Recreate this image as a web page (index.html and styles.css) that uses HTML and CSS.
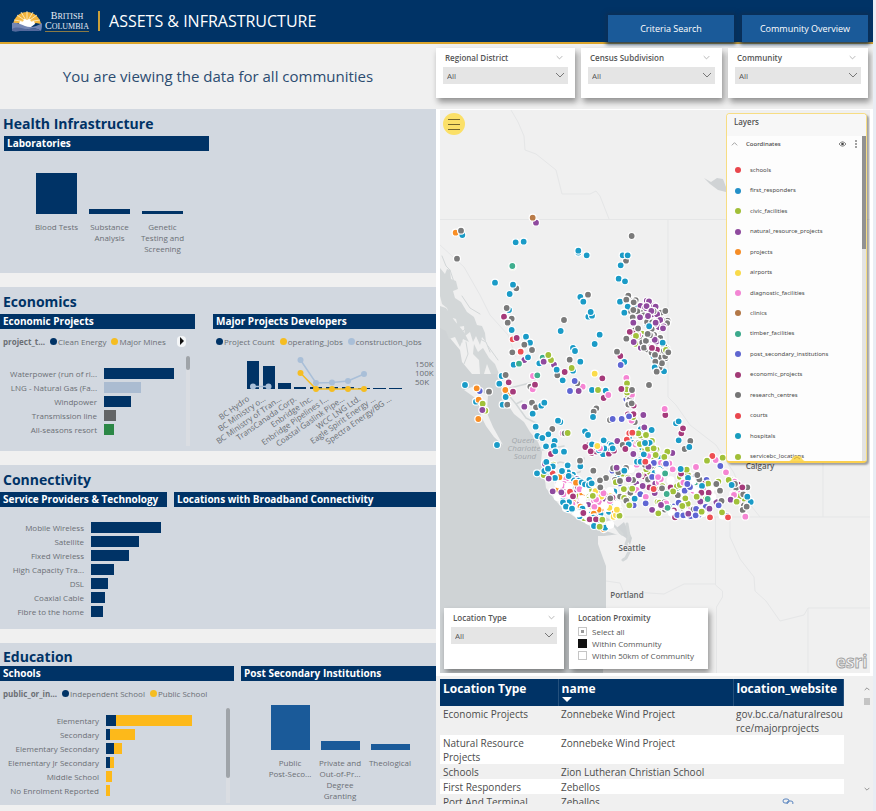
FILE: index.html
```html
<!DOCTYPE html>
<html lang="en">
<head>
<meta charset="utf-8">
<title>Assets &amp; Infrastructure</title>
<link rel="stylesheet" href="styles.css">
</head>
<body>
<svg width="0" height="0" class="defs" aria-hidden="true">
  <symbol id="chev" viewBox="0 0 10 6"><path d="M1 1l4 4 4-4" fill="none" stroke="currentColor"/></symbol>
</svg>
<div class="page">
  <header class="top">
    <svg class="sun" viewBox="0 0 30 21" aria-hidden="true">
      <path d="M1 13C3 5 8 1 15 1s13 5 14 12l-5-1-9 4-9-4z" fill="#f3b53c"/>
      <path d="M15 11L5 4M15 11L9 1M15 11V0M15 11l6-10M15 11l10-7M15 11L2 9M15 11l13-2" stroke="#fdf3d2" stroke-width=".8"/>
      <path d="M7 13l1-3 3 1 1-3 3 1 3-1 1 3 3-1 1 3-4 3H10z" fill="#fff"/>
      <path d="M0 12c4-1 8 1 13 3s11 1 17-3c0 2 0 5-1 8-6-4-11-2-16-1-5 1-9 2-13 1z" fill="#7386b4"/>
      <path d="M0 18c6-4 12 1 17 0s8-1 12 2H0z" fill="#54699d"/>
    </svg>
    <div class="brand"><span>B<small>RITISH</small></span><span>C<small>OLUMBIA</small></span></div>
    <h1>ASSETS &amp; INFRASTRUCTURE</h1>
    <nav>
      <button type="button">Criteria Search</button>
      <button type="button">Community Overview</button>
    </nav>
  </header>
  <main>
    <div class="left">
      <p class="message">You are viewing the data for all communities</p>

      <section>
        <h2>Health Infrastructure</h2>
        <div class="panels health">
          <div>
            <h3>Laboratories</h3>
            <ul class="columns labs">
              <li><i style="height:41px"></i><span>Blood Tests</span></li>
              <li><i style="height:5px"></i><span>Substance Analysis</span></li>
              <li><i style="height:3px"></i><span>Genetic Testing and Screening</span></li>
            </ul>
          </div>
        </div>
      </section>

      <section>
        <h2>Economics</h2>
        <div class="panels economics">
          <div>
            <h3>Economic Projects</h3>
            <p class="legend"><b>project_t...</b><span class="navy">Clean Energy</span><span class="gold">Major Mines</span><button type="button" class="next" aria-label="More"></button></p>
            <div class="scroller">
              <ul class="bars projects">
                <li><span>Waterpower (run of ri...</span><i style="width:70px"></i></li>
                <li><span>LNG - Natural Gas (Fa...</span><i class="pale" style="width:37px"></i></li>
                <li><span>Windpower</span><i style="width:27px"></i></li>
                <li><span>Transmission line</span><i class="grey" style="width:12px"></i></li>
                <li><span>All-seasons resort</span><i class="green" style="width:10px"></i></li>
              </ul>
              <div class="track"><i class="thumb short"></i></div>
            </div>
          </div>
          <div>
            <h3>Major Projects Developers</h3>
            <p class="legend indent"><span class="navy">Project Count</span><span class="gold">operating_jobs</span><span class="pale">construction_jobs</span></p>
            <svg class="combo" viewBox="213 351 223 97" role="img" aria-label="Major project developers">
              <g fill="#036">
                <rect x="247" y="360" width="12" height="28"/><rect x="263" y="365" width="12" height="23"/><rect x="278" y="382" width="13" height="6"/>
                <rect x="294" y="386" width="12" height="2"/><rect x="310" y="386" width="12" height="2"/><rect x="326" y="386" width="12" height="2"/><rect x="342" y="386" width="12" height="2"/><rect x="358" y="387" width="12" height="1"/><rect x="373" y="387" width="13" height="1"/><rect x="389" y="387" width="13" height="1"/>
              </g>
              <g fill="none" stroke-width="1.5"><path stroke="#a9bfd8" d="M253 385.500H268.500M300.500 359L316 382L332 381.500L348 380L364 373"/><path stroke="#f5bd22" d="M300.500 372L316 388H364"/></g>
              <g fill="#a9bfd8"><circle cx="253" cy="385.500" r="3"/><circle cx="268.500" cy="385.500" r="3"/><circle cx="300.500" cy="359" r="3"/><circle cx="316" cy="382" r="3"/><circle cx="332" cy="381.500" r="3"/><circle cx="348" cy="380" r="3"/><circle cx="364" cy="373" r="3"/></g>
              <g fill="#f5bd22"><circle cx="300.500" cy="372" r="3"/><circle cx="316" cy="388" r="3"/><circle cx="332" cy="388" r="3"/><circle cx="348" cy="388" r="3"/><circle cx="364" cy="388" r="3"/></g>
              <g class="tick"><text x="415" y="366">150K</text><text x="415" y="375">100K</text><text x="415" y="384">50K</text></g>
              <g class="slant">
                <text transform="translate(250 399) rotate(-35)">BC Hydro</text>
                <text transform="translate(266 399) rotate(-35)">BC Ministry o...</text>
                <text transform="translate(282 399) rotate(-35)">BC Ministry of Tran...</text>
                <text transform="translate(297 399) rotate(-35)">TransCanada Corp.</text>
                <text transform="translate(313 399) rotate(-35)">Enbridge Inc.</text>
                <text transform="translate(329 399) rotate(-35)">Enbridge Pipelines I...</text>
                <text transform="translate(345 399) rotate(-35)">Coastal Gaslink Pipe...</text>
                <text transform="translate(361 399) rotate(-35)">WCC LNG Ltd.</text>
                <text transform="translate(376 399) rotate(-35)">Eagle Spirit Energy ...</text>
                <text transform="translate(392 399) rotate(-35)">Spectra Energy/BG ...</text>
              </g>
            </svg>
          </div>
        </div>
      </section>

      <section>
        <h2>Connectivity</h2>
        <div class="panels connectivity">
          <div>
            <h3>Service Providers &amp; Technology</h3>
            <ul class="bars providers">
              <li><span>Mobile Wireless</span><i style="width:70px"></i></li>
              <li><span>Satellite</span><i style="width:48px"></i></li>
              <li><span>Fixed Wireless</span><i style="width:38px"></i></li>
              <li><span>High Capacity Tra...</span><i style="width:23px"></i></li>
              <li><span>DSL</span><i style="width:17px"></i></li>
              <li><span>Coaxial Cable</span><i style="width:14px"></i></li>
              <li><span>Fibre to the home</span><i style="width:12px"></i></li>
            </ul>
          </div>
          <div><h3>Locations with Broadband Connectivity</h3></div>
        </div>
      </section>

      <section>
        <h2 class="tight">Education</h2>
        <div class="panels education">
          <div>
            <h3>Schools</h3>
            <p class="legend"><b>public_or_in...</b><span class="navy">Independent School</span><span class="gold">Public School</span></p>
            <div class="scroller">
              <ul class="bars schools">
                <li><span>Elementary</span><i style="width:10px"></i><i class="gold" style="width:76px"></i></li>
                <li><span>Secondary</span><i style="width:4px"></i><i class="gold" style="width:25px"></i></li>
                <li><span>Elementary Secondary</span><i style="width:8px"></i><i class="gold" style="width:8px"></i></li>
                <li><span>Elementary Jr Secondary</span><i style="width:4px"></i><i class="gold" style="width:4px"></i></li>
                <li><span>Middle School</span><i class="gold" style="width:6px"></i></li>
                <li><span>No Enrolment Reported</span><i class="gold" style="width:4px"></i></li>
              </ul>
              <div class="track"><i class="thumb tall"></i></div>
            </div>
          </div>
          <div>
            <h3>Post Secondary Institutions</h3>
            <ul class="columns post">
              <li><i style="height:45px"></i><span>Public<br>Post-Seco...</span></li>
              <li><i style="height:9px"></i><span>Private and<br>Out-of-Pr...<br>Degree<br>Granting</span></li>
              <li><i style="height:6px"></i><span>Theological</span></li>
            </ul>
          </div>
        </div>
      </section>
    </div>

    <div class="right">
      <div class="filters">
        <div class="card"><label for="rd">Regional District<svg><use href="#chev"/></svg></label><div class="pick"><select id="rd"><option>All</option></select><svg><use href="#chev"/></svg></div></div>
        <div class="card"><label for="cs">Census Subdivision<svg><use href="#chev"/></svg></label><div class="pick"><select id="cs"><option>All</option></select><svg><use href="#chev"/></svg></div></div>
        <div class="card"><label for="co">Community<svg><use href="#chev"/></svg></label><div class="pick"><select id="co"><option>All</option></select><svg><use href="#chev"/></svg></div></div>
      </div>

      <div class="mapframe">
        <div class="map">
          <svg class="canvas" viewBox="440 110 430 563" role="img" aria-label="Map of British Columbia">
            <rect x="440" y="110" width="430" height="563" fill="#f0f0f0"/>
            <path fill="#cfd3d5" d="M440 318L446 326 450 338 460 350 462 362 472 374 499 374 503 380 502 398 508 405 514 414 524 422 530 432 538 442 542 452 541 462 544 472 546 488 552 496 562 508 576 518 590 526 604 532 614 530 624 522 628 530 632 538 630 545 626 538 620 534 604 536 598 536 598 544 603 558 606 566 606 590 606 608 604 625 603 673 440 673Z"/>
            <path fill="#d3d7d8" d="M440 268l5 6 2-5 3 1 1 9 5 2 2 8-5 2 2 7 6 4 6 10 7 5 3 8 5 1 3 7 1 9-4-5-2 8-4-9-3 6-3-10-5 4-1-10-6 1-2-8-6-2-3-9-5-4-2-8zM440 306l6 2 8 12 10 12 5 10-6-3-3 8-5-10-6 2-3-8-6-3zM474 344l4 8 5-4 6 10 6 6 4 10h-8l-4-10-3 10h-4l-1-14-6-6z"/>
            <g fill="none" stroke="#d3d7d8" stroke-linecap="round" stroke-linejoin="round">
              <path d="M442 256l4 10 4 4M450 270l4 12M458 318l-8-4M468 326l-8 8 2 8M478 338l8 4 4 10M488 346l10 14M462 296l8 12 10 6M466 342l2 12-4 10M440 290l6 4"/>
              <path stroke-width="1.500" d="M506 392l10 12 6-3M516 404l10 14 12 6M538 440l14-6M542 450l22-4M546 468l14-6 10 2M552 478l28-6 4-14M560 482l14 8 12 0M510 388l24-6 4-10"/>
              <path stroke-width="3" d="M544 478l16 8 14 14 18 12 16 8 14 14M627 524l2 12-3 8 4 6-4 8-3 2"/>
            </g>
            <path fill="#f0f0f0" d="M464 390l8-3 8 4 8 4-1 18 6 14 10 18-9-8-8-11-5-10-2-12-5-7zM541 470l16 8 18 14 20 20 20 16 6 8-12-4-24-10-22-20-14-12z"/>
            <path fill="#d0d3d5" d="M704 178l7 4 6-4 6 1 3 8v5l-8-2-8-6z"/>
            <g fill="none" stroke="#e5e6e7">
              <path d="M440 219.500H870M668 220V397l8 8 14 20 26 20 18 28 10 24 16 20M625 517H870M511 110l7 12 6 14 1 14 11 4 20 16 6 24 28 0 6-3 4 5 9 23M440 245l24 22 16 28 10 20 18 20 8 22"/>
              <path d="M715.500 517v68l7 6v6l-6 10v66M730 517v20l10 22 14 18 1 14 11 10 14 20 24-6 4-7h62M808 608v65M823 463v54M606 581l14 2 4 10 10-1 30 2 20-10h31"/>
            </g>
            <g id="dots" stroke="#fff" stroke-width="1.200"></g>
            <g class="water"><text x="523" y="443">Queen</text><text x="524" y="451">Charlotte</text><text x="525" y="459">Sound</text></g>
            <g class="city"><text x="760" y="469">Calgary</text><text x="632" y="551">Seattle</text><text x="627" y="598">Portland</text></g>
            <g class="esri"><text x="836" y="668">esri</text></g>
          </svg>

          <button type="button" class="menu" aria-label="Menu"><i></i><i></i><i></i></button>

          <aside class="layers">
            <h4>Layers</h4>
            <div class="group"><svg class="up"><use href="#chev"/></svg><span>Coordinates</span>
              <svg class="eye" viewBox="0 0 8 6"><path d="M0 3q4-5 8 0q-4 5-8 0" fill="none" stroke="#555" stroke-width=".8"/><circle cx="4" cy="3" r="1.500" fill="#444"/></svg>
              <svg class="more" viewBox="0 0 2 8"><circle cx="1" cy="1" r=".7"/><circle cx="1" cy="4" r=".7"/><circle cx="1" cy="7" r=".7"/></svg>
            </div>
            <ul>
              <li class="c-r">schools</li><li class="c-f">first_responders</li><li class="c-l">civic_facilities</li><li class="c-p">natural_resource_projects</li><li class="c-o">projects</li><li class="c-y">airports</li><li class="c-k">diagnostic_facilities</li><li class="c-n">clinics</li><li class="c-t">timber_facilities</li><li class="c-v">post_secondary_institutions</li><li class="c-m">economic_projects</li><li class="c-g">research_centres</li><li class="c-r">courts</li><li class="c-b">hospitals</li><li class="c-l">servicebc_locations</li>
            </ul>
            <div class="rail"></div>
            <svg class="tab" viewBox="0 0 16 6"><path d="M0 6q2 0 4-4q4-3 8 0q2 4 4 4z" fill="#fbdb5c"/><path d="M5 4l3-2 3 2" fill="none" stroke="#c9a63a" stroke-width=".8"/></svg>
          </aside>

          <div class="lower">
            <div class="card loctype"><label for="lt">Location Type<svg><use href="#chev"/></svg></label><div class="pick"><select id="lt"><option>All</option></select><svg><use href="#chev"/></svg></div></div>
            <fieldset class="card prox">
              <legend>Location Proximity</legend>
              <label><input type="checkbox" class="some">Select all</label>
              <label><input type="checkbox" checked>Within Community</label>
              <label><input type="checkbox">Within 50km of Community</label>
            </fieldset>
          </div>
        </div>
      </div>

      <div class="grid">
        <table>
          <colgroup><col class="w1"><col class="w2"><col class="w3"></colgroup>
          <thead><tr><th>Location Type</th><th>name<i class="sort"></i></th><th>location_website</th></tr></thead>
          <tbody>
            <tr><td>Economic Projects</td><td>Zonnebeke Wind Project</td><td>gov.bc.ca/naturalresou<wbr>rce/majorprojects</td></tr>
            <tr><td>Natural Resource Projects</td><td>Zonnebeke Wind Project</td><td></td></tr>
            <tr><td>Schools</td><td>Zion Lutheran Christian School</td><td></td></tr>
            <tr><td>First Responders</td><td>Zebellos</td><td></td></tr>
            <tr><td>Port And Terminal</td><td>Zeballos</td><td class="link"><svg viewBox="0 0 12 8"><g fill="none" stroke="#5b86c0"><rect x="1" y="1" width="6" height="4" rx="2"/><rect x="5" y="3" width="6" height="4" rx="2"/></g></svg></td></tr>
          </tbody>
        </table>
        <div class="vbar"><svg class="up" viewBox="0 0 10 6"><use href="#chev" width="10" height="6"/></svg><i></i><svg class="down" viewBox="0 0 10 6"><use href="#chev" width="10" height="6"/></svg></div>
      </div>
    </div>
  </main>
</div>
<script src="map.js"></script>
</body>
</html>
```
FILE: styles.css
```css
* { box-sizing: border-box; margin: 0; padding: 0; }
body { background: #e9edf4; font-family: "Open Sans", "Noto Sans", sans-serif; font-size: 8px; line-height: 11px; color: #6b6f75; }
ul { list-style: none; }
i { font-style: normal; display: block; }
button, select, input { font: inherit; color: inherit; border: 0; }
.defs { position: absolute; }
.page { margin-right: 3px; background: #f0f0f0; overflow: hidden; }

.top { display: flex; align-items: center; height: 44px; padding-left: 12px; background: #036; border-bottom: 2px solid #dba52c; color: #fff; }
.sun { width: 30px; height: 21px; }
.brand { display: flex; flex-direction: column; align-items: center; margin-left: 3px; font: 10px/9px "Liberation Serif", serif; color: #e8edf5; }
.brand small { font-size: 8px; }
.brand span:last-child { border-bottom: 1px solid #8a7a45; }
h1 { margin-left: 9px; padding-left: 9px; border-left: 2px solid #c9a03a; font-size: 16px; line-height: 20px; font-weight: 400; white-space: nowrap; }
nav { display: flex; gap: 8px; margin-left: auto; margin-right: 5px; align-self: flex-end; }
nav button { width: 126px; height: 27px; background: #1a5a99; color: #fff; font-size: 9px; font-weight: 500; box-shadow: 0 0 4px 2px #0d2f55; }

main { display: grid; grid-template-columns: 436fr 437fr; align-items: start; }
.message { height: 65px; padding-top: 20px; text-align: center; font-size: 15px; line-height: 24px; color: #2c4c70; }
.left { display: grid; padding-bottom: 6px; }
section { min-height: 164px; margin-bottom: 14px; background: #d2d8e0; }
section:last-child { min-height: 162px; margin-bottom: 0; }
h2 { height: 27px; padding: 3px 3px 0; font-size: 14px; line-height: 23px; color: #036; font-weight: 700; }
h2.tight { height: 23px; padding-top: 2px; }
h3 { height: 15px; padding-left: 3px; background: #036; color: #fff; font-size: 10px; line-height: 15px; font-weight: 700; white-space: nowrap; }
.panels { display: grid; }
.health { grid-template-columns: 205fr 226fr; padding-left: 4px; }
.economics { grid-template-columns: 195fr 223fr; gap: 18px; }
.connectivity { grid-template-columns: 167fr 262fr; gap: 7px; }
.education { grid-template-columns: 234fr 195fr; gap: 7px; }

.columns { display: flex; }
.columns li { display: flex; flex-direction: column; justify-content: flex-end; align-items: center; text-align: center; }
.columns i { background: #036; width: 41px; }
.columns span { margin-top: 7px; width: 51px; height: 44px; }
.labs { padding: 22px 0 0 27px; gap: 2px; }
.post { padding: 24px 0 0 24px; }
.post li { width: 50px; }
.post i { width: 39px; background: #1a5a99; }

.legend { display: flex; align-items: center; height: 14px; margin-top: 5px; padding-left: 3px; gap: 5px; white-space: nowrap; }
.legend span { display: flex; align-items: center; gap: 1px; }
.legend span::before { content: ""; width: 7px; height: 7px; border-radius: 50%; background: #036; }
.legend .gold::before { background: #f5bd22; }
.legend .pale::before { background: #a9bfd8; }
.next { width: 9px; height: 11px; margin: 0 9px 0 auto; border-radius: 4px; background: #f4f6f8; }
.next::before { content: ""; display: block; margin-left: 3px; border: solid transparent; border-width: 4px 0 4px 4px; border-left-color: #111; }
.scroller { display: flex; justify-content: space-between; }
.track { width: 4px; background: #dadde2; }
.thumb { background: #9fa4a9; border-radius: 2px; }
.short { height: 14px; }
.tall { height: 70px; }
.bars li { display: flex; align-items: center; height: 14px; }
.bars span { text-align: right; white-space: nowrap; margin-right: 7px; }
.bars i { height: 11px; background: #036; }
.bars .pale { background: #abbcd1; }
.bars .grey { background: #636567; }
.bars .green { background: #2b8746; }
.bars .gold { background: #fdb91a; }
.projects { padding: 18px 0 13px; }
.projects span { width: 97px; }
.projects + .track { margin: 8px 5px 3px 0; }
.providers { display: grid; padding-top: 13px; }
.providers span { width: 84px; }
.schools { padding: 13px 0 6px; }
.schools span { width: 99px; }
.schools + .track { margin: 8px 4px 0 0; }
.combo { display: block; width: 100%; margin-top: 4px; }
.combo text { font-size: 8px; fill: #686c72; }
.slant { text-anchor: end; }

.filters { display: grid; grid-template-columns: 139fr 141fr 140fr; gap: 6px; padding: 4px 5px 0 0; }
.card { background: #fff; border: 0; box-shadow: 2px 4px 6px #0006; color: #555; }
.card > label { display: flex; justify-content: space-between; align-items: center; font-weight: 600; }
.card > label svg { width: 7px; height: 5px; color: #999; }
.filters .card { height: 50px; padding: 4px 7px 0; }
.filters label { padding: 0 5px 0 2px; margin-bottom: 4px; }
.pick { position: relative; }
.pick select { appearance: none; width: 100%; height: 17px; padding-left: 4px; background: #e5e5e5; border-radius: 0; }
.pick svg { position: absolute; right: 3px; top: 5px; width: 10px; height: 6px; color: #777; pointer-events: none; }

.mapframe { margin-top: 11px; padding: 1px 3px 3px 4px; background: #fff; }
.map { position: relative; overflow: hidden; }
.canvas { display: block; width: 100%; }
.city text { font: 600 8px "Open Sans", sans-serif; fill: #5c5f62; text-anchor: middle; stroke: #f0f0f0; stroke-width: 2px; paint-order: stroke; }
.water text { font: italic 8px "Open Sans", sans-serif; fill: #a3a8ac; text-anchor: middle; }
.esri text { font: 700 17px "Open Sans", sans-serif; fill: #f6f6f6; stroke: #a5a5a5; stroke-width: 1px; }
.menu { position: absolute; left: 3px; top: 3px; width: 22px; height: 22px; border-radius: 50%; background: #fbe068; display: grid; align-content: center; justify-items: center; gap: 4px; }
.menu i { width: 12px; height: 1px; background: #75662c; }
.layers { position: absolute; right: 3px; top: 3px; width: 141px; height: 350px; display: flex; flex-direction: column; background: #fdfdfd; border: 1px solid #f7dd83; border-bottom: 2px solid #fbd04f; border-radius: 4px; box-shadow: 2px 2px 2px #0005; font-family: "Noto Sans", sans-serif; color: #4a4a4a; overflow: hidden; }
.layers h4 { padding: 2px 7px 0; height: 22px; flex: none; background: #f7f7f7; font-size: 8px; font-weight: 500; }
.group { display: flex; align-items: center; height: 16px; flex: none; padding: 0 9px 0 4px; font-size: 6px; font-weight: 500; }
.group .up { width: 7px; height: 4px; transform: rotate(180deg); color: #777; margin-right: 8px; }
.eye { width: 7px; height: 6px; margin-left: auto; }
.more { width: 2px; height: 8px; margin-left: 9px; }
.layers ul { height: 307px; margin-top: 8px; display: grid; grid-auto-rows: 1fr; flex: none; font-size: 6px; }
.layers li { display: flex; align-items: center; padding-left: 8px; gap: 9px; }
.layers li::before { content: ""; width: 6px; height: 6px; border-radius: 50%; background: var(--c); }
.rail { position: absolute; right: 0; top: 22px; bottom: 0; width: 4px; background: #e3e3e3; border-top: 113px solid #929292; }
.tab { position: absolute; left: 62px; bottom: 0; width: 16px; height: 6px; }
.c-r { --c: #e9474d; } .c-f { --c: #2490c8; } .c-l { --c: #a1bf38; } .c-p { --c: #8f4a9e; } .c-o { --c: #f68d26; } .c-y { --c: #f9da4a; } .c-k { --c: #f386d4; } .c-n { --c: #b37847; } .c-t { --c: #3ba98b; } .c-v { --c: #5f66d0; } .c-m { --c: #a23a76; } .c-g { --c: #757575; } .c-b { --c: #189dbd; }

.lower { position: absolute; left: 4px; bottom: 4px; display: flex; gap: 5px; }
.lower .card { height: 61px; }
.loctype { width: 120px; padding: 4px 7px; }
.loctype label { padding: 0 2px; margin-bottom: 4px; }
.prox { width: 139px; padding: 4px 9px 0; }
.prox legend { float: left; width: 100%; font-weight: 600; margin-bottom: 2px; }
.prox label { clear: both; display: flex; gap: 5px; height: 12px; align-items: center; font-weight: 400; justify-content: flex-start; }
.prox input { appearance: none; width: 9px; height: 9px; border: 1px solid #c5c5c5; background: #fff; }
.prox input:checked { background: #111; border-color: #111; }
.prox .some { background: linear-gradient(#999, #999) center / 3px 3px no-repeat #fff; }

.grid { display: flex; justify-content: space-between; height: 125px; margin-top: 3px; padding-left: 4px; overflow: hidden; }
table { width: 404px; table-layout: fixed; border-collapse: collapse; font-size: 10px; line-height: 14px; color: #4c4c4c; }
.w1 { width: 118px; } .w2 { width: 175px; }
th { height: 27px; padding: 2px 3px 0; background: #036; color: #fff; font-size: 12px; line-height: 16px; font-weight: 700; text-align: left; vertical-align: top; border-right: 1px solid #24507c; }
.sort { width: 0; border: solid transparent; border-width: 5px 5px 0; border-top-color: #fff; }
td { padding: 1px 3px 0; vertical-align: top; }
tbody tr:nth-child(even) { background: #fff; }
td.link { text-align: center; }
td.link svg { width: 12px; height: 8px; }
.vbar { display: flex; flex-direction: column; align-items: center; width: 6px; margin-right: 3px; padding: 8px 0 13px; color: #555; }
.vbar svg { width: 6px; height: 4px; }
.vbar .up { transform: rotate(180deg); }
.vbar i { width: 6px; height: 7px; margin-top: 7px; background: #c4c4c4; }
.vbar .down { margin-top: auto; }
```
FILE: map.js
```js
// Marker colours by layer key.
const colours = { r: '#ee4f52', b: '#1a9bc7', l: '#a1c13a', p: '#8f4a9e', o: '#f98e25', y: '#fbdc4b', k: '#f585d3', n: '#b97b48', t: '#3fae8e', v: '#5f66d3', m: '#a53a7b', g: '#7a7a7a', w: '#ffffff' };
const host = document.getElementById('dots');

function mark(x, y, key) {
  const c = document.createElementNS('http://www.w3.org/2000/svg', 'circle');
  c.setAttribute('cx', x);
  c.setAttribute('cy', y);
  c.setAttribute('r', 3.5);
  c.setAttribute('fill', colours[key]);
  host.appendChild(c);
}

// Dense areas: a repeatable scatter along a line of towns.
let seed = 11;
function rnd() { seed = (seed * 16807) % 2147483647; return seed / 2147483647; }
function scatter(n, x1, y1, x2, y2, spreadX, spreadY, mix, floor) {
  for (let i = 0; i < n; i++) {
    const t = rnd();
    const x = x1 + (x2 - x1) * t + (rnd() - 0.5) * spreadX;
    const y = Math.min(floor, y1 + (y2 - y1) * t + (rnd() - 0.5) * spreadY);
    mark(x, y, mix[Math.floor(rnd() * mix.length)]);
  }
}
scatter(34, 634, 304, 664, 322, 12, 18, 'gpgpgpbp', 400);
scatter(22, 634, 330, 650, 350, 14, 16, 'kpglgp', 400);
scatter(52, 636, 322, 664, 362, 16, 22, 'ggggpgmgbg', 400);
scatter(26, 628, 388, 632, 422, 8, 10, 'lkgmlv', 430);
scatter(50, 632, 430, 660, 468, 26, 22, 'lbklpgrbk', 516);
scatter(66, 612, 490, 664, 480, 20, 44, 'pglkmvbgwwkl', 512);
scatter(90, 660, 492, 715, 500, 34, 44, 'klpvgmtlkwww', 516);
scatter(22, 732, 482, 748, 508, 8, 14, 'kgbmlg', 516);
scatter(40, 548, 470, 576, 486, 16, 16, 'bblpokbr', 515);
scatter(90, 562, 490, 618, 508, 14, 22, 'kompoblywwwk', 530);
scatter(40, 562, 502, 612, 528, 10, 8, 'bkblomtbww', 532);
scatter(18, 596, 448, 612, 454, 24, 12, 'bbgmb', 500);

const sheets = [
  [436, 100, 'p300,368 n290,353 o59,398 b79,405 g75,392 g63,476 b239,427 b263,425 g587,408 b427,458 b427,452 b452,466 g570,482 b560,466 b575,466 b554,496 l230,500 t229,498 b548,536 b567,544 b177,548 g241,565 b231,554 b221,582 g456,584 b433,591 b442,605 b552,605 g571,599 g593,607 b575,620 b564,638 g604,634 g592,630 p646,633 p636,648 p612,652 b457,650 b468,647 b464,636 g590,652 b219,630 g212,624 m204,650 g227,656 g384,660'],
  [436, 310, 'b374,63 b491,74 b476,102 b411,114 b417,123 b433,155 g401,149 b411,182 l407,174 m386,186 p354,164 g364,196 b362,179 b380,211 k440,230 g424,220 v416,213 v402,243 p428,243 y476,191 m499,205 b468,240 l486,240 b509,242 m503,264 k517,255 b565,8 g215,38 b227,60 r230,88 m242,84 b270,80 b282,98 g265,104 g229,127 r254,125 g288,120 p265,150 b276,142 b233,164 t249,161 b197,198 g209,195 b190,221 m218,217 o218,250 o208,240 m231,245 b209,261 b200,284 g214,284 b87,225 v131,243 o122,235 g159,245 b120,275 o128,269 l140,281 l148,302 p139,300 o127,327 b183,405 k291,198 t304,196 g283,230 k290,238 m297,224 p265,290 g288,278 g300,292 b316,287 b325,278 b290,311 b299,350 b373,336 b366,332 g349,357 b337,373 b304,378 b319,384 k380,370 g386,370 l395,369 b356,393 b330,409 b353,408 m345,432 b358,424 b384,425 b331,456 b395,466 b433,469 g432,452 b310,160 t320,143 p323,155 l345,150 l337,135 b447,364 b456,375 b503,391 b468,403 k492,415 y484,408 m448,411 m464,424 p544,393 g560,405 b578,403 m568,417 b530,415 g472,482 g510,504 g492,511 g493,532 b565,482 b303,490 b325,483 b336,476 b378,483 b398,498 p350,544 p376,547 r402,545 m411,559 o420,518 b437,517 b460,510 b447,523 b459,525 b467,520 b381,577 b390,590 b408,596 m442,609 m461,628 m480,628 l499,629 b474,648 l491,650 g523,565 g481,295 g473,305 b471,321 g522,330 v530,327 v557,327 k571,204 l573,220 l572,238 m556,237 g588,240 g587,280 p622,315 g639,225 p625,352 b647,360 l607,370 r589,368 l630,375 b641,399 b627,399 p592,432 b603,455 b614,455 r628,455 m553,138 g543,125 b565,156 v554,165 g571,86 l600,78 p593,96 p592,38 g608,496 p608,496 g552,513 p578,508 b596,566 g571,572 l580,586 v629,580 p620,528'],
  [650, 310, 'g46,3 p17,38 p39,55 b38,98 l48,120 g55,127 g15,135 g16,155 b14,172 g20,185 m46,315 k44,297 b78,340 b86,334 m94,370 m99,355 b86,391 g121,393 g104,417 b118,411 l11,415 l17,435 p67,429 l52,425 l43,441 k197,450 r187,438 l171,452 l218,443 v211,468 v48,461 k138,471 k68,478 l110,479 b92,477 g148,508 g142,495 b114,504 b156,528 k228,487 v120,531 v112,522 l236,510 b245,525 g210,542 g199,522 m176,548 m154,548 l140,560 g292,532 m277,532 b292,560 g290,590 k286,620 r234,622 k252,555 p242,569 l260,575 l216,607 v206,586 t173,567 l97,588 l106,565 r11,537 g36,535 t50,552 p33,585 l25,610 m75,622 v82,615 v100,616 v122,618 p115,611 v137,616 l155,605 r180,622']
];
for (const [ox, oy, list] of sheets) {
  for (const item of list.split(' ')) {
    const [x, y] = item.slice(1).split(',').map(Number);
    mark(ox + x / 3, oy + y / 3, item[0]);
  }
}
```
